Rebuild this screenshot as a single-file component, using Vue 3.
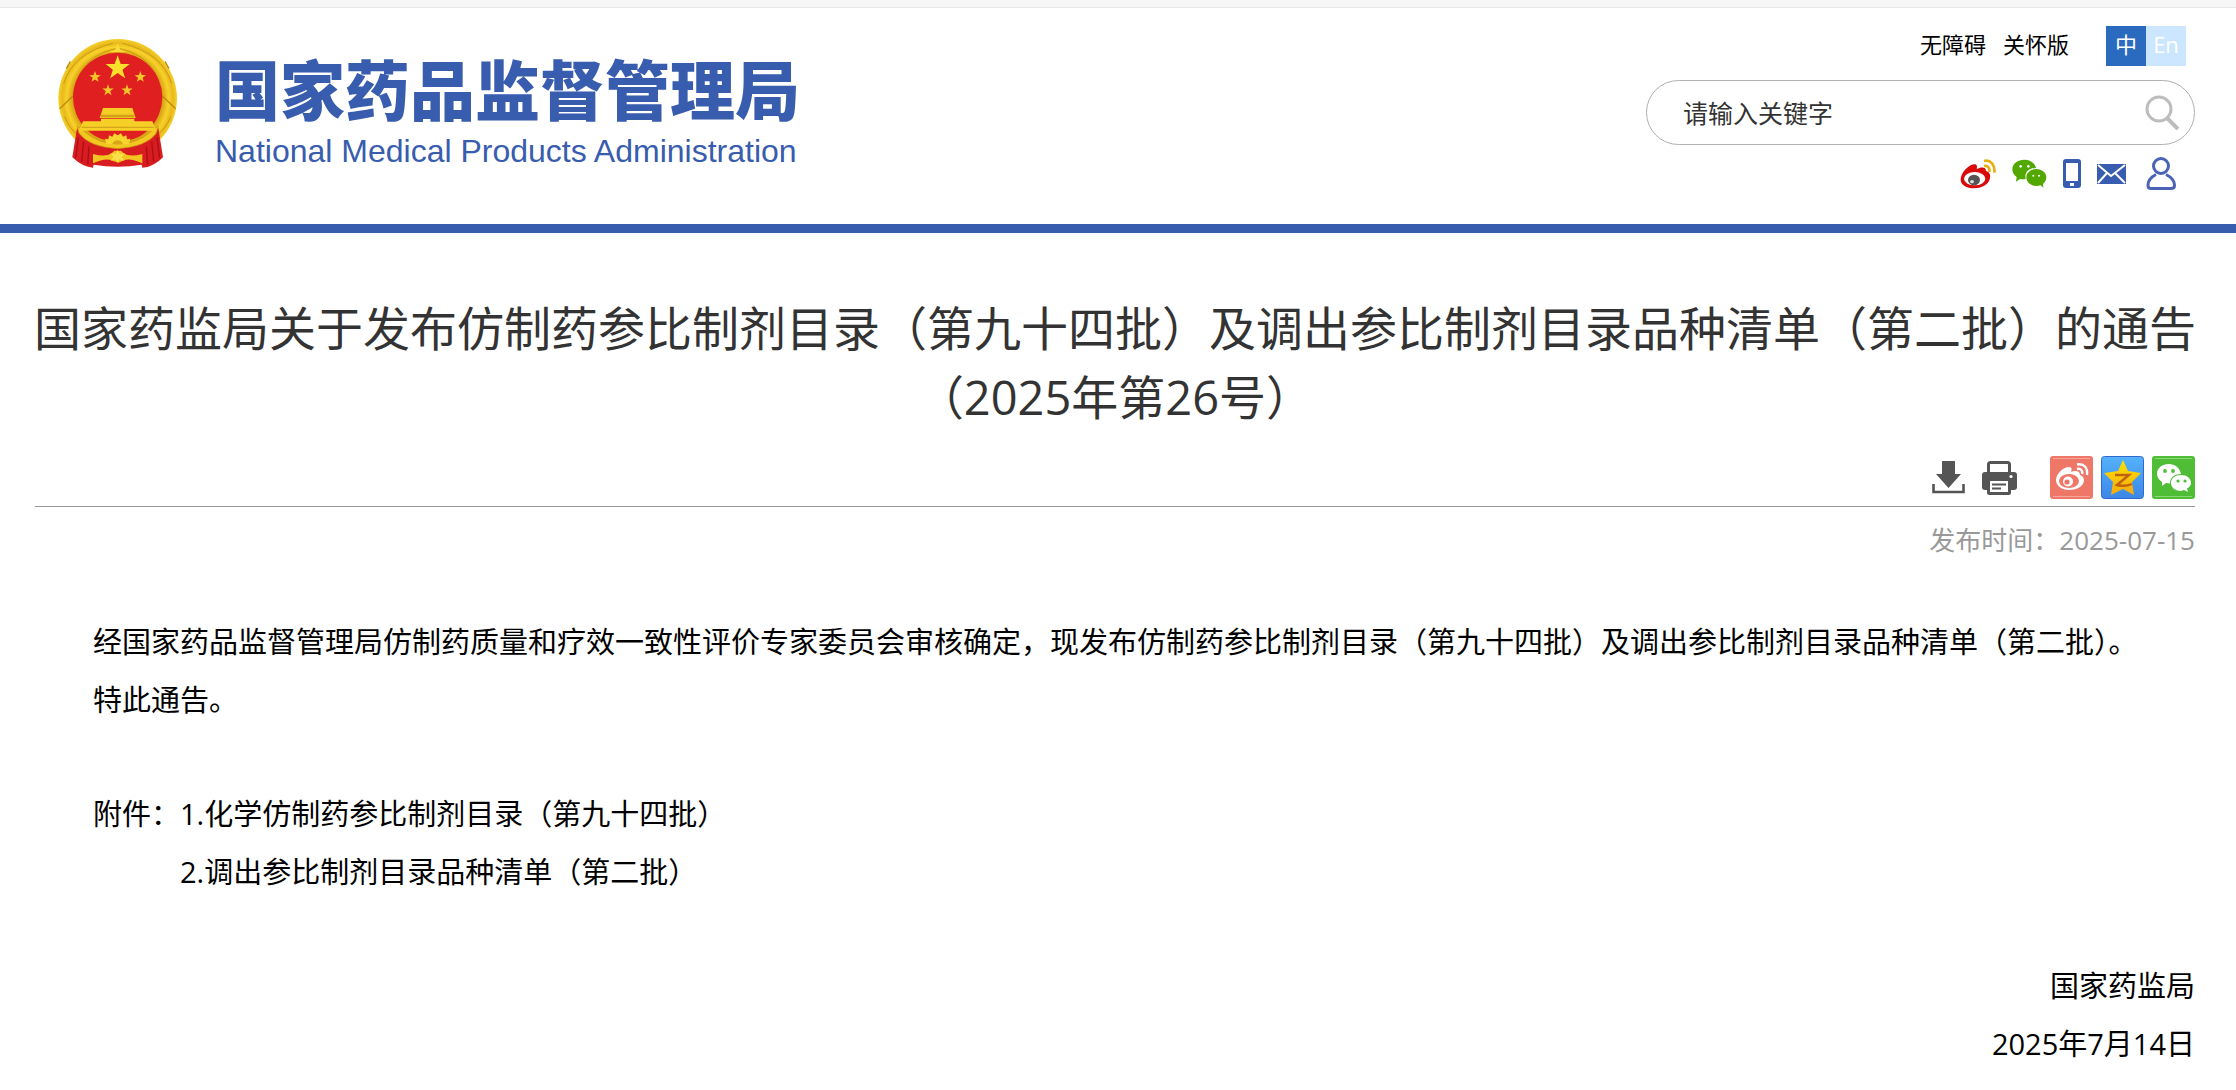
<script setup>
import { ref } from 'vue'

const keyword = ref('')
const star = '0,-10 2.4,-3.2 9.5,-3.1 3.8,1.3 5.9,8.1 0,4 -5.9,8.1 -3.8,1.3 -9.5,-3.1 -2.4,-3.2'
const smallStars = [
  [166, 231], [302, 231], [205, 271], [262, 271]
]
</script>

<template>
  <div class="page">
    <div class="strip"></div>
    <header class="header">
      <a class="brand" href="#" aria-label="国家药品监督管理局">
        <svg class="emblem" viewBox="55 117 357 387" aria-hidden="true">
          <defs>
            <radialGradient id="gold" cx="50%" cy="50%" r="50%">
              <stop offset="0.76" stop-color="#d9a514" />
              <stop offset="0.86" stop-color="#f8d22a" />
              <stop offset="0.93" stop-color="#e9b91c" />
              <stop offset="1" stop-color="#f4cf2c" />
            </radialGradient>
          </defs>
          <circle cx="234" cy="295" r="178" fill="url(#gold)" />
          <path d="M80 206 L92 184 M388 206 L376 184 M60 326 L100 288 M408 326 L368 288" stroke="#b98c10" stroke-width="4" />
          <path d="M118 224 Q152 160 234 144 Q316 160 350 224 M72 250 Q100 160 220 130 M396 250 Q368 160 248 130 M74 350 Q92 390 116 404 M394 350 Q376 390 352 404" fill="none" stroke="#c99a12" stroke-width="3" />
          <path d="M234 130 L242 150 L262 156 H206 L226 150 Z" fill="#f8dc3c" />
          <circle cx="234" cy="292" r="134" fill="#e01f20" />
          <path d="M112 384 Q160 432 234 432 Q308 432 356 384 L370 472 Q348 494 324 501 L308 503 L306 494 Q234 506 162 494 L160 503 Q130 502 98 472 Z" fill="#d81c1f" />
          <path d="M116 412 L108 474 M132 424 L126 486 M148 440 L144 494 M352 412 L360 474 M336 424 L342 486 M320 440 L324 494" stroke="#a90f18" stroke-width="4" />
          <path d="M112 378 L134 394 Q176 432 234 432 Q292 432 334 394 L356 378 L350 400 Q318 442 234 446 Q150 442 118 400 Z" fill="#f3c722" stroke="#c08d10" stroke-width="2" />
          <path d="M190 324 H278 L288 354 H180 Z" fill="#f5cd25" />
          <path d="M184 344 H284 V352 H184 Z" fill="#d2a017" />
          <path d="M130 364 H184 V356 H284 V364 H338 L350 392 H118 Z" fill="#f6cf27" />
          <path d="M126 382 H342" stroke="#d5a51a" stroke-width="4" />
          <path d="M200 432 L196 416 L206 418 L208 406 L218 410 L224 400 L234 406 L244 400 L250 410 L260 406 L262 418 L272 416 L268 432 Z" fill="#f8d52e" />
          <path d="M218 432 A17 17 0 0 1 250 432" fill="#d8a719" />
          <path d="M160 462 Q198 472 216 460 L224 452 H244 L252 460 Q270 472 308 462 L308 490 Q270 472 250 482 L236 488 L218 482 Q198 472 160 490 Z" fill="#f2c522" />
          <path d="M234 450 L240 462 L256 460 L246 470 L254 482 L238 478 L234 488 L228 478 L214 482 L222 470 L212 460 L228 462 Z" fill="#fae14a" />
          <polygon :points="star" transform="translate(234 204) scale(3.8)" fill="#fbe02b" />
          <polygon
            v-for="(s, i) in smallStars"
            :key="i"
            :points="star"
            :transform="`translate(${s[0]} ${s[1]}) scale(1.8)`"
            fill="#f4c52a"
          />
        </svg>
        <span class="names">
          <span class="name-zh">国家药品监督管理局</span>
          <span class="name-en">National Medical Products Administration</span>
        </span>
      </a>

      <div class="tools">
        <nav class="quick">
          <a href="#">无障碍</a>
          <a href="#">关怀版</a>
          <span class="langs">
            <a class="lang on" href="#">中</a><a class="lang" href="#">En</a>
          </span>
        </nav>
        <form class="search" @submit.prevent>
          <input v-model="keyword" type="text" placeholder="请输入关键字" aria-label="请输入关键字" />
          <button type="submit" aria-label="搜索">
            <svg width="34" height="35" viewBox="0 0 34 35" fill="none" stroke="#bdbdbd" stroke-width="3" aria-hidden="true">
              <circle cx="14" cy="14" r="12" />
              <path d="M22 23 L33 34" stroke-width="4" />
            </svg>
          </button>
        </form>
        <nav class="social">
          <a href="#" aria-label="微博">
            <svg width="36" height="30" viewBox="62 56 108 90" aria-hidden="true">
              <path d="M64 118 C64 98 86 74 104 72 C114 71 114 80 112 86 C124 80 140 78 140 92 C152 96 154 104 152 114 C148 134 126 144 104 144 C82 144 64 134 64 118 Z" fill="#d90a0a" />
              <ellipse cx="106" cy="115" rx="32" ry="20" fill="#fff" />
              <ellipse cx="104" cy="119" rx="18" ry="16" fill="#555" />
              <ellipse cx="98" cy="124" rx="6" ry="5" fill="#ddd" />
              <path d="M134 62 C154 57 168 74 165 97 M134 77 C146 74 152 84 150 95" fill="none" stroke="#e6af10" stroke-width="8" />
            </svg>
          </a>
          <a href="#" aria-label="微信">
            <svg width="35" height="29" viewBox="215 57 105 87" aria-hidden="true">
              <path d="M252 59 C232 59 216 71 216 88 C216 98 221 106 229 111 L227 125 L239 117 C244 118 250 118 256 117 C252 96 266 84 287 84 C284 69 270 59 252 59 Z" fill="#52a800" />
              <path d="M288 87 C271 87 258 98 258 112 C258 127 271 138 288 138 C292 138 297 137 301 136 L309 143 L308 132 C314 127 318 120 318 112 C318 98 305 87 288 87 Z" fill="#52a800" />
              <g fill="#fff"><circle cx="241" cy="79" r="4" /><circle cx="264" cy="79" r="4" /><circle cx="279" cy="107" r="3" /><circle cx="296" cy="107" r="3" /></g>
            </svg>
          </a>
          <a href="#" aria-label="移动版">
            <svg width="18" height="29" viewBox="0 0 18 29" aria-hidden="true">
              <rect width="18" height="29" rx="3" fill="#385cb0" />
              <rect x="3" y="4" width="12" height="18" fill="#fff" />
              <rect x="7" y="24" width="4" height="3" fill="#fff" />
            </svg>
          </a>
          <a href="#" aria-label="邮箱">
            <svg width="29" height="20" viewBox="0 0 29 20" aria-hidden="true">
              <rect width="29" height="20" fill="#385cb0" />
              <path d="M1 1 L14 12 L28 1 M1 19 L10 9 M28 19 L18 9" fill="none" stroke="#fff" stroke-width="2" />
            </svg>
          </a>
          <a class="user" href="#" aria-label="个人中心">
            <svg width="30" height="33" viewBox="0 0 30 33" fill="none" stroke="#4a63b5" stroke-width="3" aria-hidden="true">
              <circle cx="15" cy="9" r="7.5" />
              <path d="M10 17.500 C5 20 2 24 2 28.500 C2 30.500 3 31.500 5 31.500 H25 C27 31.500 28.500 30.500 28.500 28.500 C28.500 24 25 20 20 17.500" />
            </svg>
          </a>
        </nav>
      </div>
    </header>

    <main class="article">
      <h1>国家药监局关于发布仿制药参比制剂目录（第九十四批）及调出参比制剂目录品种清单（第二批）的通告<br />（2025年第26号）</h1>

      <div class="actions">
        <button type="button" aria-label="下载">
          <svg width="33" height="33" viewBox="0 0 33 33" aria-hidden="true">
            <path d="M10 0 H23 V13 H29 L16.500 27 L4 13 H10 Z" fill="#555" />
            <path d="M1.500 23 V31 H31.500 V23" fill="none" stroke="#555" stroke-width="2.600" />
          </svg>
        </button>
        <button type="button" aria-label="打印">
          <svg width="35" height="34" viewBox="0 0 35 34" aria-hidden="true">
            <rect x="6.500" y="1.500" width="21" height="14" rx="2" fill="#fff" stroke="#555" stroke-width="3" />
            <rect y="11" width="35" height="18" rx="3" fill="#555" />
            <circle cx="29" cy="15.500" r="1.600" fill="#fff" />
            <rect x="6.500" y="18.500" width="21" height="14" rx="1" fill="#fff" stroke="#555" stroke-width="3" />
            <path d="M10 23.500 H24 M10 27.500 H19" stroke="#555" stroke-width="2" />
          </svg>
        </button>
        <span class="shares">
          <button type="button" aria-label="分享到微博">
            <svg width="43" height="43" viewBox="0 0 43 43" aria-hidden="true">
              <rect width="43" height="43" rx="3" fill="#ee7768" />
              <path d="M3 2.500 H40 M3 40.500 H40" stroke="#f6a79b" stroke-width="1" />
              <path d="M6 24 C6 18 13 11 19 11 C22 11 22 14 21 16 C26 14 30 15 30 19 C33 20 34 22 34 25 C33 31 26 34 19 34 C12 34 6 30 6 24 Z" fill="#fff" />
              <ellipse cx="19" cy="25" rx="10" ry="7" fill="#ee7768" />
              <circle cx="18" cy="25.500" r="5" fill="#fff" />
              <circle cx="17" cy="26" r="2.600" fill="#ee7768" />
              <path d="M27 8.500 C34 7 38 12 37 19 M27 13 C31 12 33 15 32 18" fill="none" stroke="#fff" stroke-width="2.400" />
            </svg>
          </button>
          <button type="button" aria-label="分享到QQ空间">
            <svg width="43" height="43" viewBox="0 0 43 43" aria-hidden="true">
              <defs>
                <linearGradient id="qz" x1="0" y1="0" x2="0" y2="1">
                  <stop offset="0" stop-color="#55b2fb" /><stop offset="1" stop-color="#3b86e6" />
                </linearGradient>
                <linearGradient id="qs" x1="0" y1="0" x2="0" y2="1">
                  <stop offset="0" stop-color="#fbe400" /><stop offset="1" stop-color="#f5a80c" />
                </linearGradient>
              </defs>
              <rect x="0.500" y="0.500" width="42" height="42" rx="3" fill="url(#qz)" stroke="#2f69cf" />
              <polygon points="22,4 27,15 40,17 31,26 33,39 22,33 10,39 12,26 3,17 17,15" fill="url(#qs)" />
              <path d="M14 19 H28 L16 29 Q24 31 31 28" fill="none" stroke="#c0620e" stroke-width="2.400" />
            </svg>
          </button>
          <button type="button" aria-label="分享到微信">
            <svg width="43" height="43" viewBox="0 0 43 43" aria-hidden="true">
              <rect width="43" height="43" rx="3" fill="#4fbd35" />
              <path d="M3 2.500 H40 M3 40.500 H40" stroke="#8ad878" stroke-width="1" />
              <path d="M17 8 C10 8 5 12 5 18 C5 21 7 24 10 26 L10 30 L14 27 L18 27.500 C18 21 23 18 29 18 C28 12 23 8 17 8 Z" fill="#fff" />
              <path d="M29 19 C23 19 19 22.500 19 27 C19 32 24 35 29 35 L32 34 L36 36 L35 32.500 C38 31 39 29 39 27 C39 22.500 35 19 29 19 Z" fill="#fff" />
              <g fill="#4fbd35"><circle cx="13" cy="15" r="1.900" /><circle cx="21" cy="15" r="1.900" /><circle cx="26" cy="25" r="1.600" /><circle cx="33" cy="25" r="1.600" /></g>
            </svg>
          </button>
        </span>
      </div>

      <p class="date">发布时间：2025-07-15</p>

      <div class="body">
        <p>经国家药品监督管理局仿制药质量和疗效一致性评价专家委员会审核确定，现发布仿制药参比制剂目录（第九十四批）及调出参比制剂目录品种清单（第二批）。</p>
        <p>特此通告。</p>
        <div class="files">
          <span>附件：</span>
          <div class="list">
            <a href="#">1.化学仿制药参比制剂目录（第九十四批）</a>
            <a href="#">2.调出参比制剂目录品种清单（第二批）</a>
          </div>
        </div>
        <div class="sign">
          <p>国家药监局</p>
          <p>2025年7月14日</p>
        </div>
      </div>
    </main>
  </div>
</template>

<style>
body {
  margin: 0;
  background: #fff;
}
</style>

<style scoped>
.page {
  font-family: "Open Sans", "Noto Sans CJK SC", sans-serif;
  color: #000;
}
.page a {
  color: inherit;
  text-decoration: none;
}
.page p {
  margin: 0;
}
.page button {
  padding: 0;
  border: 0;
  background: none;
  cursor: pointer;
}
.page svg {
  display: block;
}
.strip {
  height: 7px;
  background: #f6f6f6;
  border-bottom: 1px solid #e8e8e8;
}
.header {
  display: flex;
  justify-content: space-between;
  height: 216px;
  padding: 0 41px 0 58px;
  border-bottom: 9px solid #385cae;
}
.brand {
  display: flex;
  align-items: flex-start;
  padding-top: 31px;
}
.emblem {
  width: 119px;
  height: 129px;
}
.names {
  display: flex;
  flex-direction: column;
  margin-left: 38px;
  padding-top: 14px;
  white-space: nowrap;
  color: #385cae;
}
.name-zh {
  font-family: "Noto Sans CJK SC", sans-serif;
  font-weight: 900;
  font-size: 65px;
  line-height: 68px;
}
.name-en {
  font-family: "Liberation Sans", sans-serif;
  font-size: 32px;
  line-height: 36px;
  padding-top: 12px;
}
.tools {
  display: flex;
  flex-direction: column;
  align-items: flex-end;
  padding-top: 18px;
}
.quick {
  display: flex;
  align-items: flex-start;
  gap: 17px;
  padding-right: 9px;
  font-size: 22px;
  line-height: 36px;
}
.langs {
  display: flex;
  margin-left: 20px;
}
.page .lang {
  width: 40px;
  height: 40px;
  text-align: center;
  color: #fff;
  background: #cce6ff;
}
.page .lang.on {
  background: #2a6abf;
}
.search {
  display: flex;
  align-items: center;
  box-sizing: border-box;
  width: 549px;
  height: 65px;
  margin-top: 14px;
  padding: 0 15px 0 36px;
  border: 1px solid #b0b0b0;
  border-radius: 33px;
}
.search input {
  flex: 1;
  min-width: 0;
  padding: 0;
  border: 0;
  outline: 0;
  background: none;
  font-family: inherit;
  font-size: 25px;
  line-height: 36px;
  color: #333;
}
.search input::placeholder {
  color: #333;
  opacity: 1;
}
.social {
  display: flex;
  align-items: center;
  gap: 16px;
  margin-top: 12px;
  padding-right: 19px;
}
.social .user {
  margin-left: 4px;
}
.article {
  padding: 61px 41px 15px 35px;
}
h1 {
  margin: 0 -2px;
  font-size: 47px;
  font-weight: 400;
  line-height: 69px;
  text-align: center;
  color: #333;
}
.actions {
  display: flex;
  justify-content: flex-end;
  align-items: center;
  gap: 17px;
  padding: 24px 0 7px;
  border-bottom: 1px solid #999;
}
.shares {
  display: flex;
  gap: 8px;
  margin-left: 16px;
}
.date {
  padding-top: 15px;
  font-size: 26px;
  line-height: 36px;
  text-align: right;
  color: #999;
}
.body {
  padding-top: 55px;
  font-size: 29px;
  line-height: 58px;
}
.body > p {
  text-indent: 2em;
}
.files {
  display: flex;
  margin-top: 56px;
  padding-left: 58px;
}
.list {
  display: flex;
  flex-direction: column;
}
.sign {
  margin-top: 56px;
  text-align: right;
}
</style>
